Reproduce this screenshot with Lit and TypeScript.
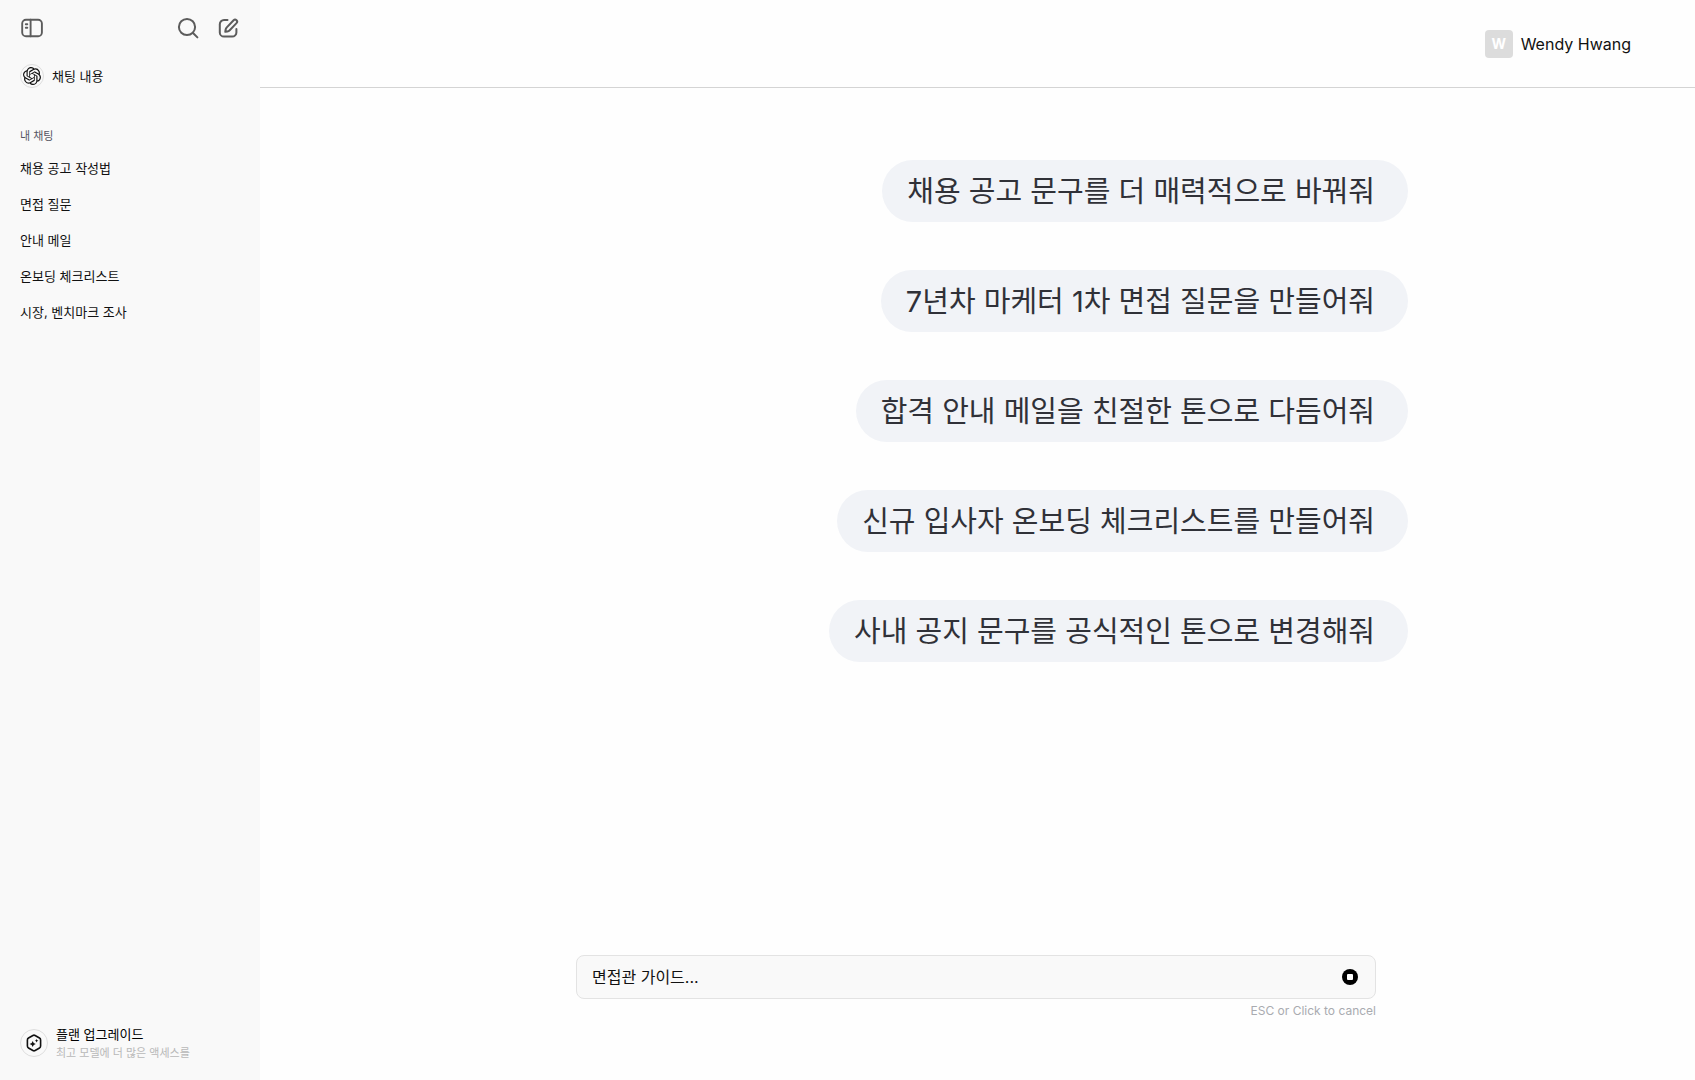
import { LitElement, html, css } from "lit";
import { customElement, state } from "lit/decorators.js";

const CHATS = ["채용 공고 작성법", "면접 질문", "안내 메일", "온보딩 체크리스트", "시장, 벤치마크 조사"];

const MESSAGES = [
  "채용 공고 문구를 더 매력적으로 바꿔줘",
  "7년차 마케터 1차 면접 질문을 만들어줘",
  "합격 안내 메일을 친절한 톤으로 다듬어줘",
  "신규 입사자 온보딩 체크리스트를 만들어줘",
  "사내 공지 문구를 공식적인 톤으로 변경해줘",
];

const panelIcon = html`<svg width="24" height="24" viewBox="0 0 24 24" fill="none" stroke="currentColor" stroke-width="1.9" stroke-linecap="round" aria-hidden="true">
  <rect x="2.200" y="3.800" width="19.700" height="16.500" rx="3.800" />
  <path d="M10.600 3.700v16.600M5.800 8.200h1.500M5.800 11.700h1.500" />
</svg>`;

const searchIcon = html`<svg width="24" height="24" viewBox="0 0 24 24" fill="none" stroke="currentColor" stroke-width="2" stroke-linecap="round" aria-hidden="true">
  <circle cx="11" cy="11" r="8.100" />
  <path d="M17 17l4.400 4.400" />
</svg>`;

const composeIcon = html`<svg width="24" height="24" viewBox="0 0 24 24" fill="none" stroke="currentColor" stroke-width="2" stroke-linecap="round" stroke-linejoin="round" aria-hidden="true">
  <path d="M11.500 4H8A4.200 4.200 0 0 0 3.800 8.200v8.200A4.200 4.200 0 0 0 8 20.600h8.200A4.200 4.200 0 0 0 20.400 16.400V13" />
  <path d="M17.600 4.200a2.050 2.050 0 0 1 2.900 2.900l-6.800 7.100c-.7.700-1.500 1.100-2.400 1.250l-2 .3.300-2c.15-.9.600-1.750 1.200-2.400z" />
</svg>`;

const knotIcon = html`<svg width="18" height="18" viewBox="0 0 24 24" fill="currentColor" aria-hidden="true">
  <path d="M22.2819 9.8211a5.9847 5.9847 0 0 0-.5157-4.9108 6.0462 6.0462 0 0 0-6.5098-2.9A6.0651 6.0651 0 0 0 4.9807 4.1818a5.9847 5.9847 0 0 0-3.9977 2.9 6.0462 6.0462 0 0 0 .7427 7.0966 5.98 5.98 0 0 0 .511 4.9107 6.051 6.051 0 0 0 6.5146 2.9001A5.9847 5.9847 0 0 0 13.2599 24a6.0557 6.0557 0 0 0 5.7718-4.2058 5.9894 5.9894 0 0 0 3.9977-2.9001 6.0557 6.0557 0 0 0-.7475-7.0729zm-9.022 12.6081a4.4755 4.4755 0 0 1-2.8764-1.0408l.1419-.0804 4.7783-2.7582a.7948.7948 0 0 0 .3927-.6813v-6.7369l2.02 1.1686a.071.071 0 0 1 .038.052v5.5826a4.504 4.504 0 0 1-4.4945 4.4944zm-9.6607-4.1254a4.4708 4.4708 0 0 1-.5346-3.0137l.142.0852 4.783 2.7582a.7712.7712 0 0 0 .7806 0l5.8428-3.3685v2.3324a.0804.0804 0 0 1-.0332.0615L9.74 19.9502a4.4992 4.4992 0 0 1-6.1408-1.6464zM2.3408 7.8956a4.485 4.485 0 0 1 2.3655-1.9728V11.6a.7664.7664 0 0 0 .3879.6765l5.8144 3.3543-2.0201 1.1685a.0757.0757 0 0 1-.071 0l-4.8303-2.7865A4.504 4.504 0 0 1 2.3408 7.872zm16.5963 3.8558L13.1038 8.364 15.1192 7.2a.0757.0757 0 0 1 .071 0l4.8303 2.7913a4.4944 4.4944 0 0 1-.6765 8.1042v-5.6772a.79.79 0 0 0-.407-.667zm2.0107-3.0231l-.142-.0852-4.7735-2.7818a.7759.7759 0 0 0-.7854 0L9.409 9.2297V6.8974a.0662.0662 0 0 1 .0284-.0615l4.8303-2.7866a4.4992 4.4992 0 0 1 6.6802 4.66zM8.3065 12.863l-2.02-1.1638a.0804.0804 0 0 1-.038-.0567V6.0742a4.4992 4.4992 0 0 1 7.3757-3.4537l-.142.0805L8.704 5.459a.7948.7948 0 0 0-.3927.6813zm1.0976-2.3654l2.602-1.4998 2.6069 1.4998v2.9994l-2.5974 1.4997-2.6067-1.4997Z" />
</svg>`;

const upgradeIcon = html`<svg width="18" height="18" viewBox="0 0 18 18" fill="none" aria-hidden="true">
  <path d="M7.900 1.500a2.200 2.200 0 0 1 2.200 0l4.400 2.500a2.200 2.200 0 0 1 1.100 1.900v6.200a2.200 2.200 0 0 1-1.100 1.900l-4.400 2.500a2.200 2.200 0 0 1-2.200 0L3.500 14a2.200 2.200 0 0 1-1.100-1.900V5.900A2.200 2.200 0 0 1 3.500 4z" stroke="currentColor" stroke-width="1.6" />
  <path d="M7.700 6.900q.5 2.600 3.100 3.100-2.600.5-3.100 3.100-.5-2.600-3.100-3.100 2.600-.5 3.100-3.100zM11.600 5q.3 1.500 1.800 1.800-1.500.3-1.800 1.800-.3-1.500-1.800-1.800 1.500-.3 1.800-1.800z" fill="currentColor" />
</svg>`;

const stopIcon = html`<svg width="16" height="16" viewBox="0 0 16 16" aria-hidden="true">
  <circle cx="8" cy="8" r="8" fill="#000" />
  <rect x="5" y="5" width="6" height="6" rx="1" fill="#fff" />
</svg>`;

@customElement("chat-sidebar")
export class ChatSidebar extends LitElement {
  static styles = css`
    :host {
      display: flex;
      flex-direction: column;
      box-sizing: border-box;
      padding: 16px 20px;
      background: #f9f9f9;
      color: #111;
      font-size: 13px;
      line-height: 20px;
    }
    button {
      border: 0;
      padding: 0;
      background: none;
      color: #5c5c5c;
      font: inherit;
      cursor: pointer;
      display: flex;
    }
    a {
      color: inherit;
      text-decoration: none;
    }
    .tools {
      display: flex;
      gap: 16px;
    }
    .tools .panel {
      margin-right: auto;
    }
    .current {
      display: flex;
      align-items: center;
      gap: 8px;
      margin-top: 24px;
    }
    .badge {
      box-sizing: border-box;
      display: grid;
      place-items: center;
      flex: none;
      width: 24px;
      height: 24px;
      border: 1px solid #dedede;
      border-radius: 50%;
    }
    .badge.large {
      width: 28px;
      height: 28px;
    }
    .heading {
      margin: 38px 0 0;
      font-size: 11px;
      font-weight: 400;
      line-height: 20px;
      color: #555562;
    }
    .list {
      list-style: none;
      margin: 4px 0 0;
      padding: 0;
    }
    .list a {
      display: block;
      padding: 8px 0;
    }
    .upgrade {
      display: flex;
      align-items: center;
      gap: 8px;
      margin-top: auto;
      padding-bottom: 2px;
    }
    .title,
    .note {
      display: block;
    }
    .title {
      color: #000;
    }
    .note {
      font-size: 11px;
      line-height: 18px;
      color: #b8b8b8;
    }
  `;

  render() {
    return html`
      <div class="tools">
        <button class="panel" type="button" aria-label="사이드바">${panelIcon}</button>
        <button type="button" aria-label="검색">${searchIcon}</button>
        <button type="button" aria-label="새 채팅">${composeIcon}</button>
      </div>
      <a class="current" href="#chat"><span class="badge">${knotIcon}</span>채팅 내용</a>
      <h2 class="heading">내 채팅</h2>
      <nav>
        <ul class="list">
          ${CHATS.map((name, i) => html`<li><a href="#chat-${i + 1}">${name}</a></li>`)}
        </ul>
      </nav>
      <a class="upgrade" href="#upgrade">
        <span class="badge large">${upgradeIcon}</span>
        <span>
          <span class="title">플랜 업그레이드</span>
          <span class="note">최고 모델에 더 많은 액세스를</span>
        </span>
      </a>
    `;
  }
}

@customElement("chat-composer")
export class ChatComposer extends LitElement {
  @state() private text = "면접관 가이드...";

  static styles = css`
    :host {
      display: block;
    }
    .box {
      box-sizing: border-box;
      display: flex;
      align-items: center;
      height: 44px;
      padding: 0 17px 0 15px;
      border: 1px solid #e3e3e3;
      border-radius: 8px;
      background: #f9f9f9;
    }
    .field {
      flex: 1;
      min-width: 0;
      padding: 0;
      border: 0;
      outline: 0;
      background: none;
      color: #111;
      font: inherit;
      font-size: 16px;
      line-height: 24px;
    }
    .stop {
      display: flex;
      padding: 0;
      border: 0;
      background: none;
      cursor: pointer;
    }
    .hint {
      margin: 4px 0 0;
      text-align: right;
      font-size: 12px;
      line-height: 16px;
      color: #a9abb0;
    }
  `;

  private onInput(e: Event) {
    this.text = (e.target as HTMLInputElement).value;
  }

  render() {
    return html`
      <form class="box" @submit=${(e: Event) => e.preventDefault()}>
        <input class="field" type="text" aria-label="메시지" .value=${this.text} @input=${this.onInput} />
        <button class="stop" type="button" aria-label="중지">${stopIcon}</button>
      </form>
      <p class="hint">ESC or Click to cancel</p>
    `;
  }
}

@customElement("app-root")
export class AppRoot extends LitElement {
  static styles = css`
    :host {
      display: grid;
      grid-template-columns: 260px minmax(0, 1fr);
      min-height: 100vh;
      background: #fff;
      font-family: Inter, "Noto Sans CJK KR", sans-serif;
    }
    .page {
      display: flex;
      flex-direction: column;
      background: #fefefe;
    }
    .header {
      display: flex;
      align-items: center;
      justify-content: flex-end;
      gap: 8px;
      box-sizing: border-box;
      height: 88px;
      padding: 0 64px;
      border-bottom: 1px solid #d4d4d4;
      font-size: 16px;
      line-height: 24px;
      color: #111;
    }
    .avatar {
      display: grid;
      place-items: center;
      width: 28px;
      height: 28px;
      border-radius: 4px;
      background: #dcdcdc;
      color: #fff;
      font-size: 14px;
      font-weight: 700;
    }
    .body {
      flex: 1;
      display: flex;
      flex-direction: column;
      align-items: center;
      justify-content: space-between;
      padding: 72px 3px 61px 0;
    }
    .thread {
      display: flex;
      flex-direction: column;
      align-items: flex-end;
      gap: 48px;
      width: 100%;
      max-width: 864px;
      margin-bottom: 48px;
    }
    .bubble {
      margin: 0;
      padding: 10px 33px 8px 25px;
      border-radius: 31px;
      background: #f1f3f7;
      color: #303138;
      font-size: 29px;
      line-height: 44px;
    }
    .composer {
      width: 100%;
      max-width: 800px;
    }
  `;

  render() {
    return html`
      <chat-sidebar></chat-sidebar>
      <div class="page">
        <header class="header">
          <span class="avatar" aria-hidden="true">W</span>
          <span>Wendy Hwang</span>
        </header>
        <main class="body">
          <div class="thread">
            ${MESSAGES.map((text) => html`<p class="bubble">${text}</p>`)}
          </div>
          <chat-composer class="composer"></chat-composer>
        </main>
      </div>
    `;
  }
}
